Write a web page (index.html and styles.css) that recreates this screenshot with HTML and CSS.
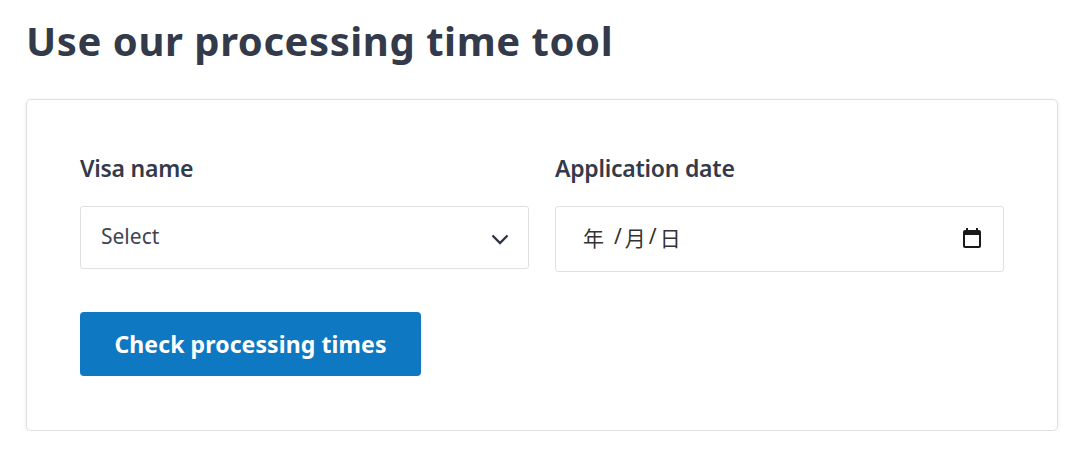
FILE: index.html
```html
<!DOCTYPE html>
<html lang="en">
<head>
    <meta charset="UTF-8">
    <title>Processing time tool</title>
    <link rel="stylesheet" href="styles.css">
</head>
<body>
    <h2 class="title">Use our processing time tool</h2>
    <div class="card">
        <div class="fields">
            <div class="field">
                <label class="label">Visa name</label>
                <div class="select">
                    <span>Select</span>
                    <svg width="18" height="18" viewBox="0 0 18 18" fill="none" stroke="#2f3542" stroke-width="2.400"><path d="M1.500 5.500 9 13 16.500 5.500"/></svg>
                </div>
            </div>
            <div class="field">
                <label class="label">Application date</label>
                <div class="date">
                    <span class="date-text"><span class="year">年</span><span>/</span><span>月</span><span>/</span><span>日</span></span>
                    <svg width="24" height="24" viewBox="0 0 24 24" fill="#1a1a1a"><path d="M19 4h-1V2h-2v2H8V2H6v2H5a2 2 0 0 0-2 2v14a2 2 0 0 0 2 2h14a2 2 0 0 0 2-2V6a2 2 0 0 0-2-2zm0 16H5V9h14v11z"/></svg>
                </div>
            </div>
        </div>
        <button class="btn">Check processing times</button>
    </div>
</body>
</html>
```

FILE: styles.css
```css
body {
    margin: 0;
    padding: 0 22px 0 26px;
    font-family: "Noto Sans", "Noto Sans CJK SC", sans-serif;
    background-color: #fff;
    color: #333a4a;
}

.title {
    margin: 0;
    padding-top: 17px;
    font-size: 40px;
    line-height: 48px;
    font-weight: 700;
    letter-spacing: 0.56px;
    font-family: "Noto Sans", sans-serif;
}

.card {
    margin-top: 34px;
    height: 332px;
    box-sizing: border-box;
    padding: 52px 53px 0;
    border: 1px solid #e0e0e0;
    border-radius: 5px;
    box-shadow: 0 1px 4px rgba(0, 0, 0, 0.08);
}

.fields {
    display: flex;
    gap: 26px;
}

.field {
    flex: 1;
}

.label {
    display: block;
    font-size: 23px;
    line-height: 32px;
    font-weight: 600;
    letter-spacing: -0.25px;
    margin-bottom: 22px;
}

.select, .date {
    display: flex;
    align-items: center;
    justify-content: space-between;
    box-sizing: border-box;
    border: 1px solid #e0e0e0;
    border-radius: 3px;
}

.select {
    height: 63px;
    padding: 0 19px 3px 20px;
    font-size: 21px;
    color: #3f4450;
}

.select svg {
    margin-top: 5px;
}

.date {
    height: 66px;
    padding: 0 19px 5px 27px;
    font-size: 21px;
    color: #333;
}

.date svg {
    margin-top: 3px;
}

.date-text {
    display: flex;
    gap: 3px;
}

.year {
    margin-right: 7px;
}

.btn {
    display: block;
    margin-top: 40px;
    width: 341px;
    height: 64px;
    background-color: #0e78c2;
    color: #fff;
    border: none;
    border-radius: 4px;
    font-family: "Noto Sans", sans-serif;
    font-size: 23px;
    font-weight: 700;
    letter-spacing: 0.1px;
}
```
